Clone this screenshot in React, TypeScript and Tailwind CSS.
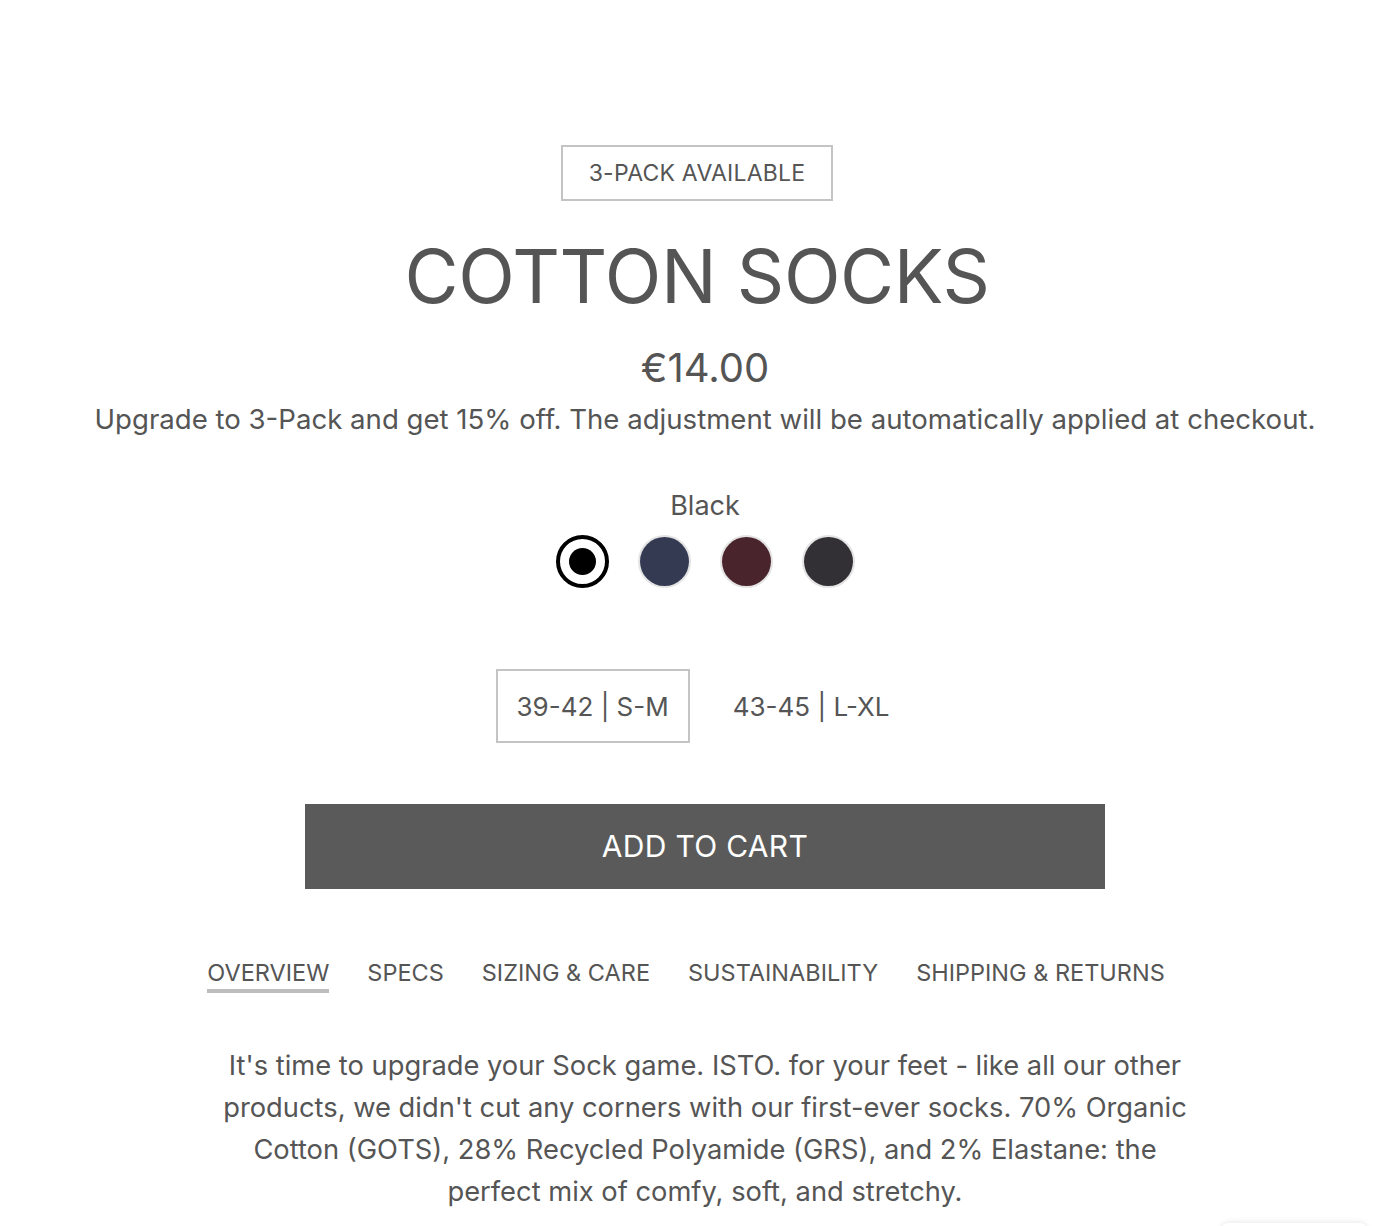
import React, { useState } from 'react';

const swatches = [
  { name: 'Black', color: 'bg-black' },
  { name: 'Navy', color: 'bg-[#333a52]' },
  { name: 'Burgundy', color: 'bg-[#49242c]' },
  { name: 'Charcoal', color: 'bg-[#323034]' },
];

const tabs = ['OVERVIEW', 'SPECS', 'SIZING & CARE', 'SUSTAINABILITY', 'SHIPPING & RETURNS'];

const App = () => {
  const [selected, setSelected] = useState(0);
  const [size, setSize] = useState(0);
  const [tab, setTab] = useState(0);

  return (
    <div className="min-h-[1226px] bg-white text-[#555] font-['Inter',sans-serif] flex flex-col items-center overflow-hidden relative pl-[32px]">
      <div className="mt-[145px] mr-[16px] h-[56px] px-[26px] border-2 border-[#c4c4c4] flex items-center text-[23px] tracking-[0.01em]">
        3-PACK AVAILABLE
      </div>

      <h1 className="mt-[30px] mr-[16px] text-[74px] leading-[90px] font-normal tracking-[-0.005em]">COTTON SOCKS</h1>

      <div className="mt-[24px] text-[40px] leading-[46px]">€14.00</div>
      <p className="mt-[9px] text-[27.6px] leading-[38px]">
        Upgrade to 3-Pack and get 15% off. The adjustment will be automatically applied at checkout.
      </p>

      <div className="mt-[51px] text-[27px] leading-[34px]">{swatches[selected].name}</div>
      <div className="mt-[12px] flex gap-[29px]">
        {swatches.map((s, i) => (
          <button
            key={s.name}
            onClick={() => setSelected(i)}
            className={
              i === selected
                ? 'w-[53px] h-[53px] rounded-full border-[4px] border-black flex items-center justify-center bg-white'
                : 'w-[53px] h-[53px] rounded-full border-2 border-[#e4e4e4] flex items-center justify-center bg-white'
            }
          >
            <span className={i === selected ? `w-[27px] h-[27px] rounded-full ${s.color}` : `w-[49px] h-[49px] rounded-full ${s.color}`} />
          </button>
        ))}
      </div>

      <div className="mt-[81px] ml-[16px] flex gap-[2px] text-[26px]">
        {['39-42 | S-M', '43-45 | L-XL'].map((s, i) => (
          <button
            key={s}
            onClick={() => setSize(i)}
            className={
              i === size
                ? 'h-[74px] px-[19px] border-2 border-[#c4c4c4]'
                : 'h-[74px] px-[39px] border-2 border-transparent'
            }
          >
            {s}
          </button>
        ))}
      </div>

      <button className="mt-[61px] w-[800px] h-[85px] bg-[#5a5a5a] text-white text-[30px] tracking-[0.01em]">
        ADD TO CART
      </button>

      <div className="mt-[68px] flex text-[23.5px] leading-[32px]">
        {tabs.map((t, i) => (
          <button
            key={t}
            onClick={() => setTab(i)}
            className={i === tab ? 'mr-[38px] border-b-4 border-[#bdbdbd]' : 'mr-[38px] border-b-4 border-transparent'}
          >
            {t}
          </button>
        ))}
      </div>

      <p className="mt-[52px] w-[990px] text-center text-[27.3px] leading-[42px]">
        It's time to upgrade your Sock game. ISTO. for your feet - like all our other products, we didn't cut any corners with our first-ever socks. 70% Organic Cotton (GOTS), 28% Recycled Polyamide (GRS), and 2% Elastane: the perfect mix of comfy, soft, and stretchy.
      </p>

      <div className="absolute left-[1222px] top-[1223px] w-[144px] h-[40px] rounded-md bg-white shadow-[0_0_6px_rgba(0,0,0,0.12)]" />
    </div>
  );
};

export default App;
